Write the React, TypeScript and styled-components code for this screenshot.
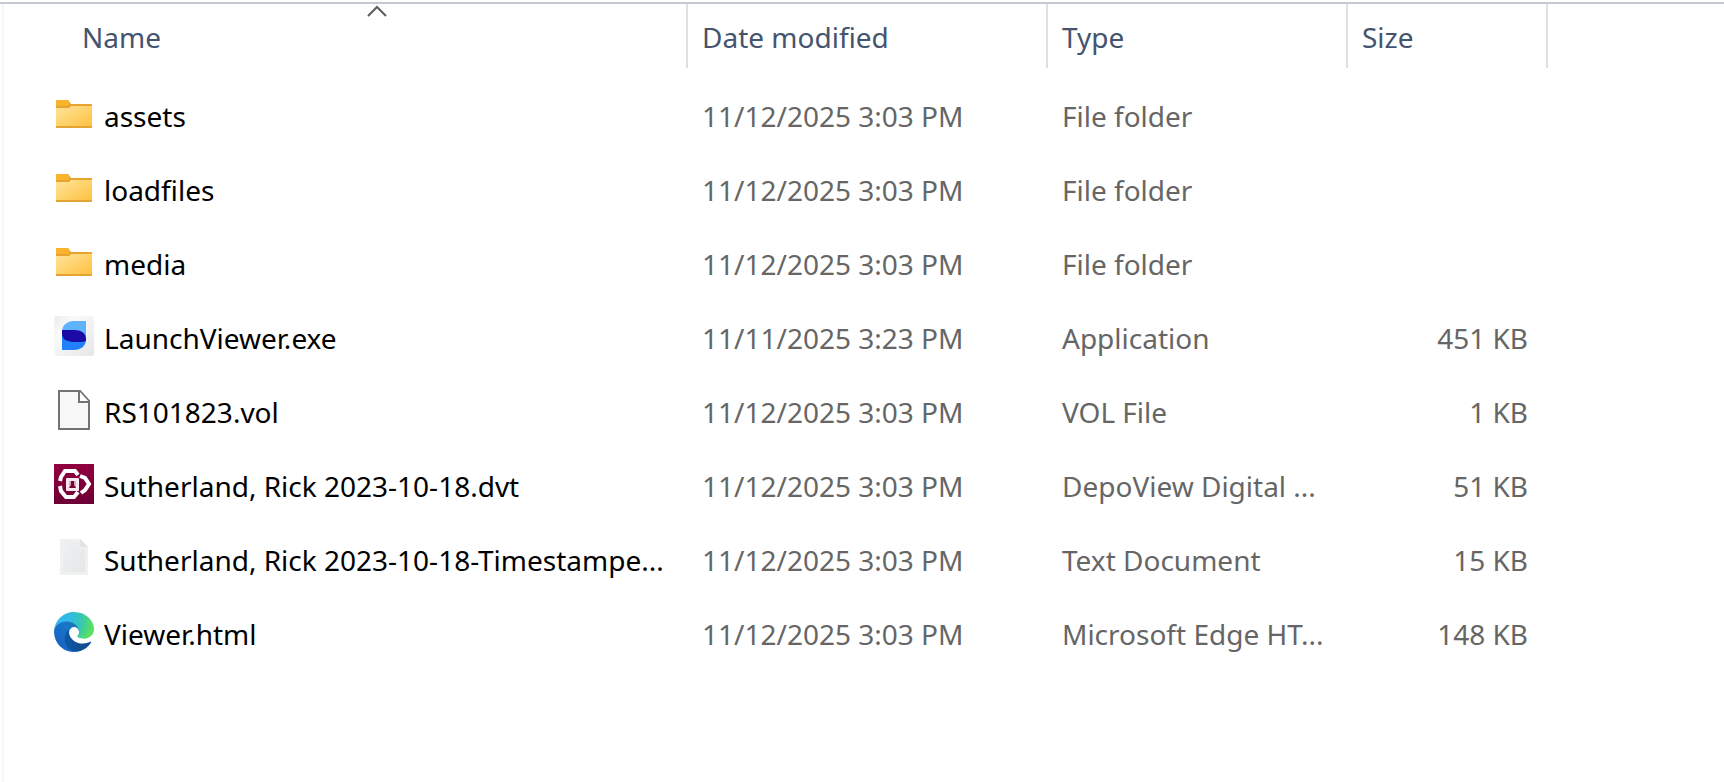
import React from "react";
import styled, { createGlobalStyle } from "styled-components";

const GlobalStyle = createGlobalStyle`
  * { box-sizing: border-box; }
  body {
    margin: 0;
    background: #fff;
    font-family: "Segoe UI", "Noto Sans", "Open Sans", sans-serif;
    font-size: 28px;
    line-height: 40px;
  }
`;

const Pane = styled.main`
  display: flex;
  flex-direction: column;
  min-height: 100vh;
  padding-top: 2px;
`;

const View = styled.div`
  flex: 1;
  border-top: 2px solid #c5cad2;
  padding-left: 2px;
`;

const Listing = styled.div`
  min-height: calc(100vh - 4px);
  border-left: 2px solid #f6f6f6;
`;

const FileTable = styled.table`
  width: 100%;
  table-layout: fixed;
  border-collapse: collapse;
`;

const Column = styled.col<{ $width?: number }>`
  width: ${(p) => (p.$width ? `${p.$width}px` : "auto")};
`;

const HeaderCell = styled.th`
  height: 75px;
  padding: 0;
  vertical-align: top;
  font-weight: 400;
`;

const HeaderButton = styled.button<{ $indent?: number }>`
  position: relative;
  display: block;
  width: 100%;
  height: 64px;
  padding: 2px 14px 0 ${(p) => p.$indent ?? 14}px;
  border: 0;
  border-right: 2px solid #e0e0e0;
  background: none;
  color: #44546f;
  font: inherit;
  text-align: left;
`;

const SortMark = styled.svg`
  position: absolute;
  top: 1px;
  left: 64px;
  width: calc(100% - 64px);
  height: 12px;
`;

const Cell = styled.td<{ $align?: "right" }>`
  height: 74px;
  padding: 0 20px 0 14px;
  color: #666;
  text-align: ${(p) => p.$align ?? "left"};
  white-space: nowrap;
`;

const NameCell = styled(Cell)`
  padding: 0 14px 0 50px;
  color: #000;
`;

const FileName = styled.div`
  display: flex;
  align-items: center;
  gap: 10px;
`;

const Icon = styled.svg`
  flex: none;
  width: 40px;
  height: 40px;
  margin-bottom: 4px;
`;

const FolderIcon = () => (
  <Icon viewBox="0 -2 40 40" aria-hidden="true">
    <defs>
      <linearGradient id="folderFront" x1="0" y1="0" x2="1" y2="1">
        <stop offset="0" stopColor="#ffe49c" />
        <stop offset="1" stopColor="#fdc03c" />
      </linearGradient>
    </defs>
    <path d="M2 5a1 1 0 0 1 1-1h11l3 4h20a1 1 0 0 1 1 1v4H2z" fill="#e8a32e" />
    <path d="M2 5a1 1 0 0 1 1-1h11l2 3-2 3H2z" fill="#fab32f" />
    <path d="M2 12h13l2-2h21v21a1 1 0 0 1-1 1H3a1 1 0 0 1-1-1z" fill="url(#folderFront)" />
    <path d="M2 30h36v1a1 1 0 0 1-1 1H3a1 1 0 0 1-1-1z" fill="#e5a334" />
  </Icon>
);

const LaunchIcon = () => (
  <Icon viewBox="0 0 40 40" aria-hidden="true">
    <defs>
      <linearGradient id="launchTile" x1="0" y1="0" x2="1" y2="1">
        <stop offset="0" stopColor="#ececec" />
        <stop offset=".3" stopColor="#fafafa" />
        <stop offset="1" stopColor="#e6e6e6" />
      </linearGradient>
    </defs>
    <rect width="40" height="40" rx="3" fill="url(#launchTile)" />
    <path d="M8 16C8 9 13 5 20 5h12v19L8 18z" fill="#5fb2fc" />
    <path d="M8 18l24 5c0 7-5 11-12 11H8z" fill="#2181fb" />
    <path d="M8 14h12c7 0 12 3 12 9v2c-2 1-6 1-10 1-8 0-14-2-14-8z" fill="#1b0aa5" />
  </Icon>
);

const BlankFileIcon = () => (
  <Icon viewBox="0 0 40 40" aria-hidden="true">
    <path d="M5 1h21l9 10v28H5z" fill="#f8f8f8" stroke="#73736f" strokeWidth="2" />
    <path d="M25 1v11h10" fill="#fff" stroke="#73736f" strokeWidth="2" />
  </Icon>
);

const DepoIcon = () => (
  <Icon viewBox="0 0 40 40" aria-hidden="true">
    <defs>
      <linearGradient id="depoTile" x1="0" y1="0" x2="0" y2="1">
        <stop offset="0" stopColor="#92003f" />
        <stop offset="1" stopColor="#6c0034" />
      </linearGradient>
    </defs>
    <rect width="40" height="40" fill="url(#depoTile)" />
    <g fill="none" stroke="#fff" strokeWidth="4">
      <path d="M6 17l1-4 4-6h10l3 4" />
      <path d="M26 12l5 2 4 6-4 6-4 3" />
      <path d="M6 22l1 5 5 6h8l4-5" />
    </g>
    <rect x="12" y="14" width="13" height="13" rx="1" fill="#f6e9ef" />
    <path d="M15 17h7v7h-7z" fill="#d9a9bf" />
    <path d="M17 17h3v4l2 3h-7l2-3z" fill="#7a0037" />
  </Icon>
);

const TextFileIcon = () => (
  <Icon viewBox="0 0 40 40" aria-hidden="true">
    <defs>
      <linearGradient id="textSheet" x1="0" y1="0" x2="1" y2="1">
        <stop offset="0" stopColor="#eef0f1" />
        <stop offset="1" stopColor="#e4e7e9" />
      </linearGradient>
    </defs>
    <path d="M6 1h20l8 8v28H6z" fill="#f0f0f0" />
    <path d="M9 4h16v6h6v24H9z" fill="url(#textSheet)" />
    <path d="M26 1l8 8h-6a2 2 0 0 1-2-2z" fill="#dfe1e3" />
  </Icon>
);

const EdgeIcon = () => (
  <Icon viewBox="0 0 256 256" aria-hidden="true">
    <defs>
      <linearGradient id="edgeBase" x1="58" y1="177" x2="236" y2="177" gradientUnits="userSpaceOnUse">
        <stop offset="0" stopColor="#0c59a4" />
        <stop offset="1" stopColor="#114a8b" />
      </linearGradient>
      <linearGradient id="edgeBody" x1="153" y1="100" x2="46" y2="217" gradientUnits="userSpaceOnUse">
        <stop offset="0" stopColor="#1b75b4" />
        <stop offset=".3" stopColor="#1976c8" />
        <stop offset="1" stopColor="#1664c4" />
      </linearGradient>
      <radialGradient id="edgeWave" cx="26" cy="47" r="250" gradientUnits="userSpaceOnUse">
        <stop offset="0" stopColor="#35b5f1" />
        <stop offset=".35" stopColor="#2fbcdf" />
        <stop offset=".6" stopColor="#36c7b0" />
        <stop offset=".9" stopColor="#5be05f" />
      </radialGradient>
    </defs>
    <path
      fill="url(#edgeBase)"
      d="M231 190.5c-3.4 1.8-6.9 3.4-10.5 4.7a101.8 101.8 0 0 1-35.9 6.5c-47.3 0-88.5-32.5-88.5-74.3a31.5 31.5 0 0 1 16.4-27.3c-42.8 1.8-53.8 46.4-53.8 72.5 0 74 68.1 81.4 82.8 81.4 7.9 0 19.8-2.3 27-4.6l1.3-.4a128.3 128.3 0 0 0 66.6-52.8 4 4 0 0 0-5.4-5.7z"
    />
    <path
      fill="url(#edgeBody)"
      d="M105.7 241.4a79.2 79.2 0 0 1-22.7-21.3 80.7 80.7 0 0 1 29.5-120c3.2-1.5 8.5-4.1 15.6-4a32.4 32.4 0 0 1 25.7 13 31.9 31.9 0 0 1 6.3 18.7c0-.2 24.5-79.6-80-79.6-43.9 0-80 41.7-80 78.2a130.2 130.2 0 0 0 12.1 56 128 128 0 0 0 156.4 67 75.5 75.5 0 0 1-62.8-8z"
    />
    <path
      fill="url(#edgeWave)"
      d="M152.3 148.9c-.8 1-3.3 2.5-3.3 5.7 0 2.6 1.7 5.2 4.8 7.3 14.3 10 41.4 8.6 41.5 8.6a59.6 59.6 0 0 0 30.3-8.3 61.4 61.4 0 0 0 30.4-52.9c.3-22.4-8-37.3-11.3-43.9C223.5 23.9 177.7 0 128 0A128 128 0 0 0 0 126.2c.5-36.5 36.8-66 80-66 3.5 0 23.5.3 42 10a72.6 72.6 0 0 1 30.9 29.3c6.1 10.6 7.2 24.1 7.2 29.5s-2.7 13.3-7.8 19.9z"
    />
  </Icon>
);

type FileEntry = {
  icon: React.ComponentType;
  name: string;
  modified: string;
  type: string;
  size?: string;
};

const files: FileEntry[] = [
  { icon: FolderIcon, name: "assets", modified: "11/12/2025 3:03 PM", type: "File folder" },
  { icon: FolderIcon, name: "loadfiles", modified: "11/12/2025 3:03 PM", type: "File folder" },
  { icon: FolderIcon, name: "media", modified: "11/12/2025 3:03 PM", type: "File folder" },
  { icon: LaunchIcon, name: "LaunchViewer.exe", modified: "11/11/2025 3:23 PM", type: "Application", size: "451 KB" },
  { icon: BlankFileIcon, name: "RS101823.vol", modified: "11/12/2025 3:03 PM", type: "VOL File", size: "1 KB" },
  { icon: DepoIcon, name: "Sutherland, Rick 2023-10-18.dvt", modified: "11/12/2025 3:03 PM", type: "DepoView Digital ...", size: "51 KB" },
  { icon: TextFileIcon, name: "Sutherland, Rick 2023-10-18-Timestampe...", modified: "11/12/2025 3:03 PM", type: "Text Document", size: "15 KB" },
  { icon: EdgeIcon, name: "Viewer.html", modified: "11/12/2025 3:03 PM", type: "Microsoft Edge HT...", size: "148 KB" },
];

export default function App() {
  return (
    <Pane>
      <GlobalStyle />
      <View>
        <Listing>
          <FileTable>
            <colgroup>
              <Column $width={684} />
              <Column $width={360} />
              <Column $width={300} />
              <Column $width={200} />
              <Column />
            </colgroup>
            <thead>
              <tr>
                <HeaderCell scope="col" aria-sort="ascending">
                  <HeaderButton type="button" $indent={78}>
                    Name
                    <SortMark viewBox="0 0 20 12" aria-hidden="true">
                      <path d="M1 11l9-9 9 9" fill="none" stroke="#5c5c5c" strokeWidth="2" />
                    </SortMark>
                  </HeaderButton>
                </HeaderCell>
                {["Date modified", "Type", "Size"].map((label) => (
                  <HeaderCell scope="col" key={label}>
                    <HeaderButton type="button">{label}</HeaderButton>
                  </HeaderCell>
                ))}
              </tr>
            </thead>
            <tbody>
              {files.map(({ icon: FileIcon, name, modified, type, size }) => (
                <tr key={name}>
                  <NameCell>
                    <FileName>
                      <FileIcon />
                      {name}
                    </FileName>
                  </NameCell>
                  <Cell>{modified}</Cell>
                  <Cell>{type}</Cell>
                  <Cell $align="right">{size}</Cell>
                </tr>
              ))}
            </tbody>
          </FileTable>
        </Listing>
      </View>
    </Pane>
  );
}
